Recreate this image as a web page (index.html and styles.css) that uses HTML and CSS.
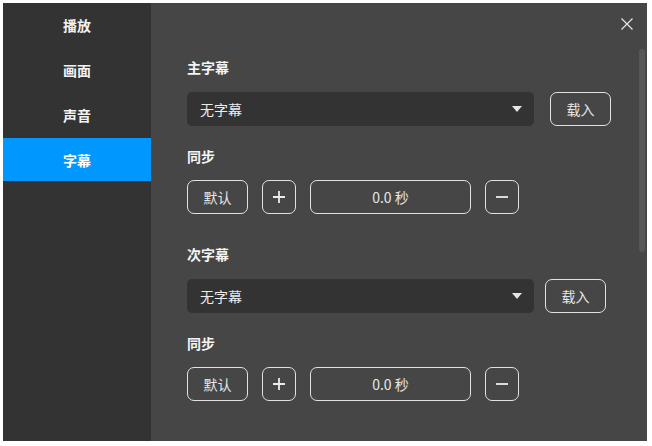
FILE: index.html
```html
<!DOCTYPE html>
<html lang="zh-CN">
<head>
<meta charset="utf-8">
<title>字幕设置</title>
<link rel="stylesheet" href="styles.css">
</head>
<body>
<div class="window">
  <nav class="sidebar">
    <div class="nav-item">播放</div>
    <div class="nav-item">画面</div>
    <div class="nav-item">声音</div>
    <div class="nav-item active">字幕</div>
  </nav>
  <main class="content">
    <button class="close" aria-label="关闭">
      <svg width="12" height="12" viewBox="0 0 12 12"><path d="M0.5 0.5 L11.5 11.5 M11.5 0.5 L0.5 11.5" stroke="#e6e6e6" stroke-width="1.2" fill="none"/></svg>
    </button>

    <section class="group">
      <h2 class="label">主字幕</h2>
      <div class="select-row">
        <div class="select">
          <span>无字幕</span>
          <svg class="caret" width="10" height="6" viewBox="0 0 10 6"><path d="M0 0 H10 L5 6 Z" fill="#e6e6e6"/></svg>
        </div>
        <button class="btn load">载入</button>
      </div>
      <h2 class="label sync">同步</h2>
      <div class="sync-row">
        <button class="btn text">默认</button>
        <button class="btn icon" aria-label="增加">
          <svg width="14" height="14" viewBox="0 0 14 14"><path d="M7 1 V13 M1 7 H13" stroke="#ececec" stroke-width="1.8" fill="none"/></svg>
        </button>
        <div class="btn value">0.0 秒</div>
        <button class="btn icon" aria-label="减少">
          <svg width="14" height="14" viewBox="0 0 14 14"><path d="M1 7 H13" stroke="#ececec" stroke-width="1.8" fill="none"/></svg>
        </button>
      </div>
    </section>

    <section class="group second">
      <h2 class="label">次字幕</h2>
      <div class="select-row tight">
        <div class="select">
          <span>无字幕</span>
          <svg class="caret" width="10" height="6" viewBox="0 0 10 6"><path d="M0 0 H10 L5 6 Z" fill="#e6e6e6"/></svg>
        </div>
        <button class="btn load">载入</button>
      </div>
      <h2 class="label sync">同步</h2>
      <div class="sync-row">
        <button class="btn text">默认</button>
        <button class="btn icon" aria-label="增加">
          <svg width="14" height="14" viewBox="0 0 14 14"><path d="M7 1 V13 M1 7 H13" stroke="#ececec" stroke-width="1.8" fill="none"/></svg>
        </button>
        <div class="btn value">0.0 秒</div>
        <button class="btn icon" aria-label="减少">
          <svg width="14" height="14" viewBox="0 0 14 14"><path d="M1 7 H13" stroke="#ececec" stroke-width="1.8" fill="none"/></svg>
        </button>
      </div>
    </section>

    <div class="scrollbar"></div>
  </main>
</div>
</body>
</html>
```

FILE: styles.css
```css
* { box-sizing: border-box; }

html, body {
  margin: 0;
  padding: 0;
  background: #ffffff;
}

body {
  padding: 3px 0 0 3px;
  font-family: "Noto Sans CJK SC", "Noto Sans", sans-serif;
  font-size: 14px;
  color: #ececec;
}

.window {
  width: 644px;
  height: 438px;
  display: flex;
  overflow: hidden;
}

.sidebar {
  width: 148px;
  flex: none;
  background: #333333;
  display: flex;
  flex-direction: column;
  gap: 2px;
}

.nav-item {
  height: 43px;
  display: flex;
  align-items: center;
  justify-content: center;
  font-size: 14px;
  font-weight: 700;
  color: #f2f2f2;
}

.nav-item.active {
  background: #0098ff;
  color: #ffffff;
}

.content {
  flex: 1;
  position: relative;
  background: #464646;
  padding: 54px 0 0 36px;
}

.close {
  position: absolute;
  top: 14px;
  left: 469px;
  width: 14px;
  height: 14px;
  padding: 1px;
  margin: 0;
  border: none;
  background: none;
  display: flex;
}

.scrollbar {
  position: absolute;
  left: 488px;
  top: 46px;
  width: 6px;
  height: 203px;
  border-radius: 3px;
  background: #575757;
}

.label {
  margin: 0 0 15px;
  font-size: 14px;
  line-height: 20px;
  font-weight: 700;
  color: #f4f4f4;
}

.label.sync {
  margin: 20px 0 14px;
}

.group.second {
  margin-top: 30px;
}

.select-row {
  display: flex;
  gap: 16px;
}

.select-row.tight {
  gap: 11px;
}

.select {
  width: 347px;
  height: 34px;
  background: #333333;
  border-radius: 5px;
  padding: 0 12px 0 13px;
  display: flex;
  align-items: center;
  justify-content: space-between;
  color: #ececec;
}

.btn {
  height: 34px;
  margin: 0;
  padding: 0;
  border: 1px solid #e2e2e2;
  border-radius: 7px;
  background: transparent;
  color: #e6e6e6;
  font-family: "Noto Sans CJK SC", "Noto Sans", sans-serif;
  font-size: 14px;
  display: flex;
  align-items: center;
  justify-content: center;
}

.btn.load {
  width: 61px;
}

.sync-row {
  display: flex;
  gap: 14px;
}

.btn.text {
  width: 61px;
}

.btn.icon {
  width: 34px;
}

.btn.value {
  width: 161px;
}
```
